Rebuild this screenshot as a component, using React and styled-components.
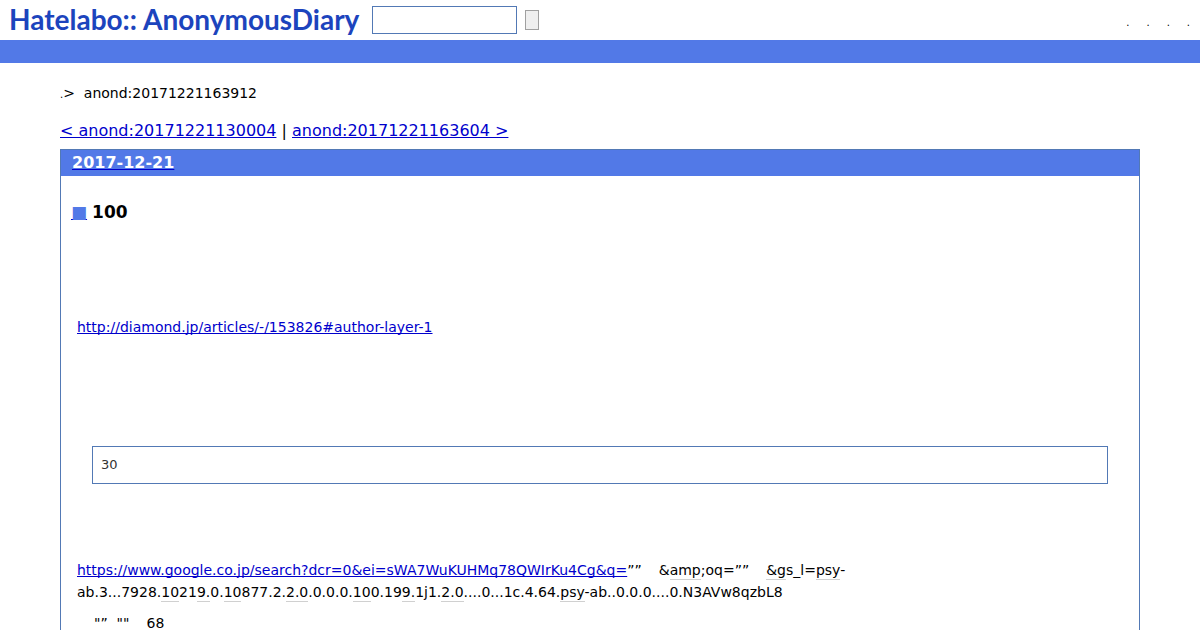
import React from 'react';
import styled, { createGlobalStyle, ThemeProvider } from 'styled-components';

const theme = {
  blue: '#5279e7',
  border: '#5279b5',
  logo: '#1c44bd',
  link: '#0000cc',
};

const GlobalStyle = createGlobalStyle`
  body {
    margin: 0;
    background: #fff;
    color: #000;
    font-family: "DejaVu Sans", Verdana, sans-serif;
    font-size: 14px;
    line-height: 22px;
    overflow: hidden;
  }

  a {
    text-decoration-skip-ink: none;
  }
`;

const Header = styled.header`
  display: flex;
  align-items: center;
  height: 40px;
  padding: 0 10px 0 9px;
`;

const Logo = styled.a`
  display: flex;
  gap: 6px;
  width: 350px;
  margin-right: 13px;
  padding-bottom: 2px;
  color: ${props => props.theme.logo};
  font-family: Lato, sans-serif;
  font-size: 28px;
  font-weight: 700;
  line-height: 40px;
  text-decoration: none;
  white-space: nowrap;
`;

const SearchForm = styled.form`
  display: flex;
  align-items: center;
  gap: 8px;
`;

const SearchInput = styled.input`
  box-sizing: border-box;
  width: 145px;
  height: 28px;
  padding: 2px 4px;
  border: 1px solid ${props => props.theme.border};
  font-size: 14px;
`;

const SearchButton = styled.button`
  box-sizing: border-box;
  width: 14px;
  height: 20px;
  padding: 0;
  border: 1px solid #a0a0a0;
  background: #efefef;
`;

const HeaderMenu = styled.nav`
  display: flex;
  gap: 17px;
  margin-left: auto;
  padding-top: 6px;
`;

const SmallLink = styled.a`
  color: #000;
  font-size: 10px;
  text-decoration: none;
`;

const Bar = styled.div`
  height: 23px;
  background: ${props => props.theme.blue};
`;

const Main = styled.main`
  padding: 19px 60px 0;
`;

const Breadcrumb = styled.div`
  white-space: pre;
`;

const Link = styled.a`
  color: ${props => props.theme.link};
`;

const Pager = styled.nav`
  margin: 13px 0 6px;
  font-size: 16px;
  line-height: 24px;
`;

const Day = styled.section`
  border: 1px solid ${props => props.theme.border};
`;

const DayTitle = styled.h2`
  margin: 0;
  padding: 0 11px;
  background: ${props => props.theme.blue};
  font-size: 16px;
  line-height: 26px;
`;

const DayLink = styled.a`
  color: #fff;
  text-decoration-color: ${props => props.theme.link};
`;

const Article = styled.article`
  padding: 24px 16px 60px;
`;

const ArticleTitle = styled.h3`
  display: flex;
  gap: 5px;
  margin: 0 0 0 -6px;
  font-size: 17px;
  line-height: 24px;
`;

const Permalink = styled.a`
  color: ${props => props.theme.blue};
  font-weight: 400;
  text-decoration-color: ${props => props.theme.link};
`;

const Paragraph = styled.p`
  margin: ${props => props.$top}px 0 0;
  white-space: pre-wrap;
`;

const Quote = styled.blockquote`
  margin: 108px 15px 0;
  padding: 7px 8px;
  border: 1px solid ${props => props.theme.border};
  color: #333;
  font-size: 13px;
`;

const Keyword = styled.a`
  padding-bottom: 1px;
  border-bottom: 1px solid #d0d0d0;
  color: #000;
  text-decoration: none;
`;

const Blank = styled.span`
  display: inline-block;
  width: 17px;
`;

const menu = ['top', 'register', 'login', 'help'];

// keywords stand between square brackets
const markKeywords = (text) => text.split(/[[\]]/).map((part, i) => (
  i % 2 ? <Keyword href="#keyword" key={i}>{part}</Keyword> : part
));

const App = () => (
  <ThemeProvider theme={theme}>
    <GlobalStyle />
    <Header>
      <Logo href="#">
        <span>Hatelabo::</span>
        <span>AnonymousDiary</span>
      </Logo>
      <SearchForm>
        <SearchInput type="text" aria-label="Search" />
        <SearchButton type="button" aria-label="Submit" />
      </SearchForm>
      <HeaderMenu>
        {menu.map((item) =>
          <SmallLink href={`#${item}`} key={item}>.</SmallLink>
        )}
      </HeaderMenu>
    </Header>
    <Bar />
    <Main>
      <Breadcrumb>
        <SmallLink href="#">.</SmallLink>
        {'>  anond:20171221163912'}
      </Breadcrumb>
      <Pager>
        <Link href="#prev">&lt; anond:20171221130004</Link>
        {' | '}
        <Link href="#next">anond:20171221163604 &gt;</Link>
      </Pager>
      <Day>
        <DayTitle><DayLink href="#day">2017-12-21</DayLink></DayTitle>
        <Article>
          <ArticleTitle>
            <Permalink href="#entry">■</Permalink>
            100
          </ArticleTitle>
          <Paragraph $top={92}>
            <Link href="#author">http://diamond.jp/articles/-/153826#author-layer-1</Link>
          </Paragraph>
          <Quote>30</Quote>
          <Paragraph $top={75}>
            <Link href="#search">https://www.google.co.jp/search?dcr=0&amp;ei=sWA7WuKUHMq78QWIrKu4Cg&amp;q=</Link>
            ””
            <Blank />
            {markKeywords('&[amp];oq=””')}
            <Blank />
            {markKeywords('[&g]s_l=[psy]-ab.3...7928.[10]21[9.]0.[10]877.2.[2.0].0.0.0.[10]0.19[9.]1j1.[2.0]....0...1c.4.64.[psy]-ab..0.0.0....0.N3AVw8qzbL8')}
          </Paragraph>
          <Paragraph $top={9}>
            <Blank />
            {'"”  ""'}
            <Blank />
            68
          </Paragraph>
        </Article>
      </Day>
    </Main>
  </ThemeProvider>
);

export default App;
